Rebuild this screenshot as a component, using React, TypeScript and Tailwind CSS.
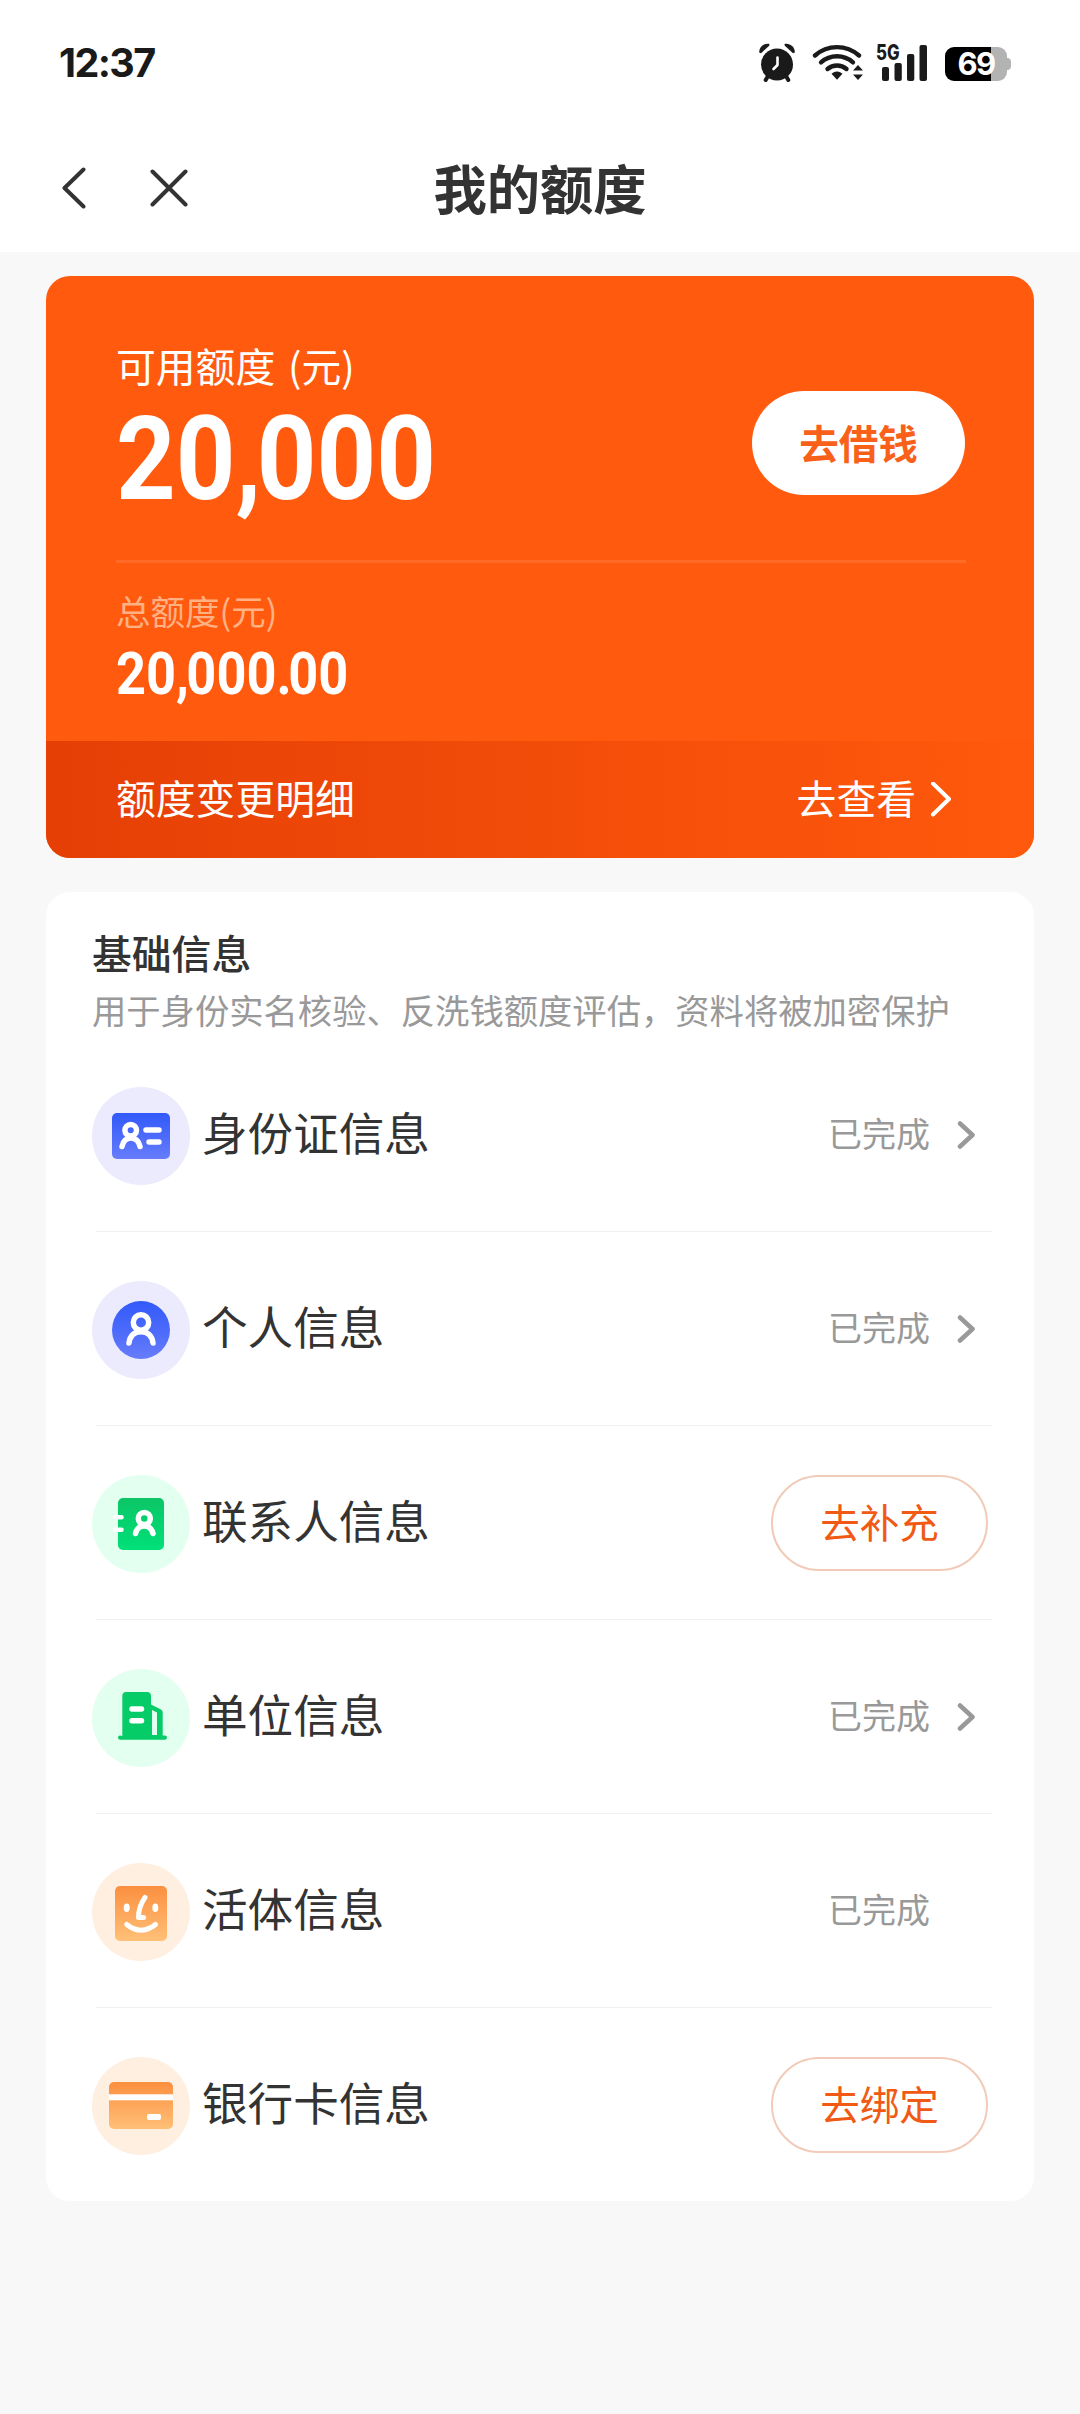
import type { ReactNode } from "react";

const StatusBar = () => {
    return (
        <div className="flex h-[124px] items-center justify-between pl-[59px] pr-[69px]">
            <span className="mt-[2px] text-[39.500px] leading-[40px] font-bold text-[#1a1a1a] tracking-[-1.600px]">12:37</span>
            <div className="flex items-center">
                {/* alarm */}
                <svg width="38" height="40" viewBox="0 0 38 40" fill="#1a1a1a">
                    <circle cx="19" cy="22.5" r="16" />
                    <path d="M1.2 10.500C1 4.500 6.500 .8 11.500 2L11.200 3.800L3 11.200Z" />
                    <path d="M36.800 10.500C37 4.500 31.500 .8 26.500 2L26.800 3.800L35 11.200Z" />
                    <path d="M10 34L7.700 38M28 34L30.300 38" stroke="#1a1a1a" strokeWidth="4" strokeLinecap="round" />
                    <path d="M19.500 15.500V23L15.500 27" fill="none" stroke="#fff" strokeWidth="2.600" strokeLinecap="round" strokeLinejoin="round" />
                </svg>
                {/* wifi */}
                <svg className="ml-[16px]" width="52" height="40" viewBox="0 0 52 40" fill="none" stroke="#1a1a1a" strokeWidth="4.400" strokeLinecap="round">
                    <path d="M3 13.500A33 33 0 0 1 47 13.500" />
                    <path d="M9 20.300A24 24 0 0 1 41 20.300" />
                    <path d="M15.500 27A14.500 14.500 0 0 1 34.500 27" />
                    <path d="M25 29.500C22.500 29.500 20.800 30.500 19.500 31.800L25 37.800L30.500 31.800C29.200 30.500 27.500 29.500 25 29.500Z" fill="#1a1a1a" stroke="none" />
                    <path d="M46 23L51 28.600H41ZM46 38L51 32.400H41Z" fill="#1a1a1a" stroke="none" />
                </svg>
                {/* mobile signal */}
                <div className="relative ml-[12px] h-[40px] w-[52px]">
                    <span className="absolute left-0 top-[2px] origin-left scale-x-[0.8] text-[21px] leading-[18px] font-extrabold text-[#1a1a1a]">5G</span>
                    <svg width="52" height="40" viewBox="0 0 52 40" fill="#1a1a1a">
                        <rect x="6" y="25" width="7" height="14" rx="2" />
                        <rect x="18.500" y="21" width="7.300" height="18" rx="2" />
                        <rect x="31" y="12" width="7.300" height="27" rx="2" />
                        <rect x="43.500" y="3" width="7.500" height="36" rx="2" />
                    </svg>
                </div>
                {/* battery */}
                <div className="ml-[17px] flex items-center pt-[4px]">
                    <div className="flex h-[34px] w-[62px] items-center justify-center rounded-[9px] bg-[linear-gradient(90deg,#000_46px,#b3b3b3_46px)]">
                        <span className="text-[31px] leading-[34px] font-bold tracking-[-1.600px] text-white">69</span>
                    </div>
                    <div className="h-[12px] w-[4px] rounded-r-[4px] bg-[#b3b3b3]" />
                </div>
            </div>
        </div>
    );
};

const NavBar = () => {
    return (
        <div className="grid h-[128px] grid-cols-[1fr_auto_1fr] items-center">
            <div className="flex items-center gap-[63px] pl-[61px]">
                <svg width="26" height="42" viewBox="0 0 26 42" fill="none" stroke="#333" strokeWidth="4" strokeLinecap="round" strokeLinejoin="round">
                    <path d="M22.500 2.500L3.500 21L22.500 39.500" />
                </svg>
                <svg width="38" height="38" viewBox="0 0 38 38" fill="none" stroke="#333" strokeWidth="4" strokeLinecap="round">
                    <path d="M2.500 2.500L35.500 35.500M35.500 2.500L2.500 35.500" />
                </svg>
            </div>
            <h1 className="pt-[5px] text-[53.300px] leading-[60px] font-bold text-[#333]">我的额度</h1>
        </div>
    );
};

const QuotaCard = () => {
    return (
        <section className="mx-[46px] mt-[24px] flex h-[582px] flex-col overflow-hidden rounded-[24px] bg-[#ff5a0e] text-white">
            <div className="flex flex-1 flex-col px-[70px] pt-[61px]">
                <div className="flex h-[223px] justify-between">
                    <div>
                        <p className="text-[39.800px] leading-[56px] [word-spacing:4px]">可用额度 (元)</p>
                        <p className="mt-[6px] origin-left scale-x-[0.89] text-[117px] leading-[120px] font-bold font-[Roboto]">
                            20<span className="tracking-[-5px]">,</span>000
                        </p>
                    </div>
                    <button className="mt-[54px] mr-[-1px] h-[104px] w-[213px] rounded-full bg-white pb-[3px] text-[39.600px] leading-[56px] font-bold text-[#f9601a]">
                        去借钱
                    </button>
                </div>
                <div className="mr-[-2px] h-[3px] bg-white/10" />
                <p className="mt-[23px] text-[34.500px] leading-[48px] text-[#ffb184]">总额度(元)</p>
                <p className="mt-[10px] origin-left scale-x-[0.88] text-[59.500px] leading-[60px] font-bold font-[Roboto]">
                    20<span className="tracking-[-3px]">,</span>000<span className="tracking-[-4px]">.</span>00
                </p>
            </div>
            <div className="flex h-[117px] items-center justify-between bg-linear-to-r from-[#e63f06] to-[#ff590d] pl-[70px] pr-[82px] text-[39.800px] leading-[56px]">
                <span className="pb-[5px]">额度变更明细</span>
                <span className="flex items-center gap-[14px]">
                    <span className="pb-[5px]">去查看</span>
                    <svg width="22" height="36" viewBox="0 0 22 36" fill="none" stroke="#fff" strokeWidth="4" strokeLinecap="round" strokeLinejoin="round">
                        <path d="M3 1.500L19 17L3 32.500" />
                    </svg>
                </span>
            </div>
        </section>
    );
};

const IdCardIcon = () => (
    <>
        <circle cx="49" cy="49" r="49" fill="#ebebfd" />
        <rect x="20" y="26" width="58" height="46" rx="5" fill="url(#blue)" />
        <g fill="none" stroke="#fff" strokeWidth="5.500" strokeLinecap="round">
            <circle cx="38.700" cy="43.300" r="5.800" />
            <path d="M30 59.500C31.500 53 34.500 51 38.800 51S46.500 53 48 59.500" />
            <path d="M54 43H67M57 55H67" />
        </g>
    </>
);

const PersonIcon = () => (
    <>
        <circle cx="49" cy="49" r="49" fill="#ebebfd" />
        <circle cx="49" cy="49" r="29" fill="url(#blue)" />
        <g fill="none" stroke="#fff" strokeWidth="5.500" strokeLinecap="round">
            <circle cx="49" cy="41.500" r="7.700" />
            <path d="M37 62C38 54 43 50.700 49 50.700S60 54 61 62" />
        </g>
    </>
);

const ContactIcon = () => (
    <>
        <circle cx="49" cy="49" r="49" fill="#e3ffef" />
        <rect x="26" y="23" width="46" height="52" rx="5" fill="url(#green)" />
        <g fill="none" stroke="#fff" strokeWidth="5.500" strokeLinecap="round">
            <circle cx="52.300" cy="43.500" r="6" />
            <path d="M43.500 58.500C45 53 48 51 52.200 51S59.500 53 61 58.500" />
            <path d="M23 42.200H29.500M23 54.800H29.500" strokeWidth="4.600" />
        </g>
    </>
);

const CompanyIcon = () => (
    <>
        <circle cx="49" cy="49" r="49" fill="#e3ffef" />
        <path d="M30.300 67V27Q30.300 23 34.300 23H55Q59 23 59 27V35.500L69 40.500Q70.700 41.500 70.700 43.500V66.500H73Q75 66.500 75 68.600T73 70.700H28Q26 70.700 26 68.600T28 66.500Z" fill="#05cc67" />
        <path d="M60 41L65 43.500V66H60Z" fill="#e3ffef" />
        <path d="M40 40H49.500M40 51.700H49.500" stroke="#fff" strokeWidth="5.500" strokeLinecap="round" />
    </>
);

const FaceIcon = () => (
    <>
        <circle cx="49" cy="49" r="49" fill="#ffefe1" />
        <rect x="23" y="23" width="52" height="55" rx="5" fill="url(#orange)" />
        <ellipse cx="34.700" cy="44.700" rx="3" ry="4.300" fill="#fff" />
        <ellipse cx="63.300" cy="44.700" rx="3" ry="4.300" fill="#fff" />
        <g fill="none" stroke="#fff" strokeWidth="5" strokeLinecap="round" strokeLinejoin="round">
            <path d="M53 34.500C49 40 46.500 47 46.500 54.500H51.500" />
            <path d="M34.700 61.500Q49 73 63.500 61.500" />
        </g>
    </>
);

const BankCardIcon = () => (
    <>
        <circle cx="49" cy="49" r="49" fill="#ffefe1" />
        <rect x="17" y="25" width="64" height="47" rx="5" fill="url(#orange)" />
        <rect x="17" y="37.300" width="64" height="6" fill="#fff" />
        <rect x="55" y="57" width="14" height="6" rx="2" fill="#fff" />
    </>
);

interface InfoItem {
    label: string;
    icon: ReactNode;
    action?: string;
    arrow?: boolean;
}

const items: InfoItem[] = [
    { label: "身份证信息", icon: <IdCardIcon />, arrow: true },
    { label: "个人信息", icon: <PersonIcon />, arrow: true },
    { label: "联系人信息", icon: <ContactIcon />, action: "去补充" },
    { label: "单位信息", icon: <CompanyIcon />, arrow: true },
    { label: "活体信息", icon: <FaceIcon /> },
    { label: "银行卡信息", icon: <BankCardIcon />, action: "去绑定" },
];

const InfoRow = ({ label, icon, action, arrow }: InfoItem) => {
    return (
        <li className="ml-[50px] mr-[42px] border-b border-[#f0f0f0] last:border-b-0">
            <div className="-ml-[4px] flex h-[193px] items-center">
                <svg className="mt-[3px] shrink-0" width="98" height="98" viewBox="0 0 98 98">
                    {icon}
                </svg>
                <span className="ml-[12px] flex-1 pb-[7px] text-[45.600px] leading-[64px] text-[#333]">{label}</span>
                {action ? (
                    <button className="mr-[4px] h-[96px] w-[217px] rounded-full border-2 border-[#f2cbb8] pb-[4px] text-[39.600px] leading-[56px] text-[#f05a14]">
                        {action}
                    </button>
                ) : (
                    <div className="flex items-center text-[34px] leading-[48px] text-[#999]">
                        <span className="pb-[3px]">已完成</span>
                        <svg className="ml-[26px] mr-[16px]" width="20" height="28" viewBox="0 0 20 28" fill="none" stroke="#999" strokeWidth="4.500" strokeLinecap="round" strokeLinejoin="round">
                            {arrow && <path d="M4 2.500L16.500 14L4 25.500" />}
                        </svg>
                    </div>
                )}
            </div>
        </li>
    );
};

const App = () => {
    return (
        <div className="min-h-[2414px] w-[1080px] bg-[#f8f8f8] font-[Inter,'Noto_Sans_CJK_SC',sans-serif]">
            <svg className="absolute" width="0" height="0">
                <defs>
                    <linearGradient id="blue" x1="0" y1="0" x2="0" y2="1">
                        <stop offset="0" stopColor="#3259fa" />
                        <stop offset="1" stopColor="#667cfb" />
                    </linearGradient>
                    <linearGradient id="green" x1="0" y1="0" x2="0" y2="1">
                        <stop offset="0" stopColor="#0cc566" />
                        <stop offset="1" stopColor="#00e079" />
                    </linearGradient>
                    <linearGradient id="orange" x1="0" y1="0" x2="0" y2="1">
                        <stop offset="0" stopColor="#fb8f40" />
                        <stop offset="1" stopColor="#ffc077" />
                    </linearGradient>
                </defs>
            </svg>
            <header className="h-[252px] bg-white">
                <StatusBar />
                <NavBar />
            </header>
            <main className="font-['Noto_Sans_CJK_SC',sans-serif]">
                <QuotaCard />
                <section className="mx-[46px] mt-[34px] h-[1309px] rounded-[24px] bg-white">
                    <div className="h-[146px] px-[46px] pt-[32px]">
                        <h2 className="text-[39.800px] leading-[56px] font-medium text-[#333]">基础信息</h2>
                        <p className="mt-[5px] text-[34.320px] leading-[48px] whitespace-nowrap text-[#999]">用于身份实名核验、反洗钱额度评估，资料将被加密保护</p>
                    </div>
                    <ul>
                        {items.map((item) => (
                            <InfoRow key={item.label} {...item} />
                        ))}
                    </ul>
                </section>
            </main>
        </div>
    );
};

export default App;
